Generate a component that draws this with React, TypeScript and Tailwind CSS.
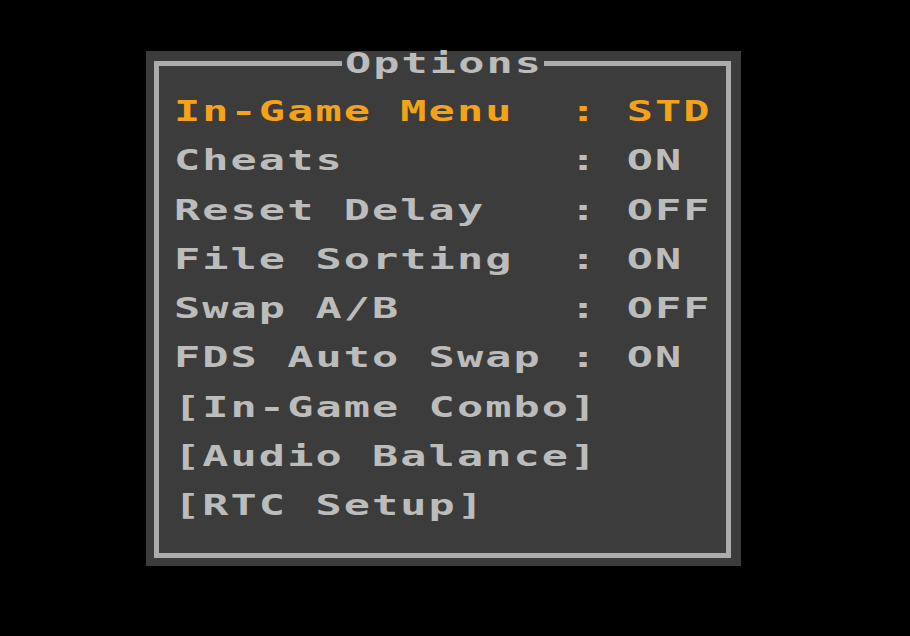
const rows = [
  { text: "In-Game Menu  : STD", active: true },
  { text: "Cheats        : ON" },
  { text: "Reset Delay   : OFF" },
  { text: "File Sorting  : ON" },
  { text: "Swap A/B      : OFF" },
  { text: "FDS Auto Swap : ON" },
  { text: "[In-Game Combo]" },
  { text: "[Audio Balance]" },
  { text: "[RTC Setup]" },
];

const font = { fontFamily: '"DejaVu Sans Mono", "Liberation Mono", monospace' };

export default function App() {
  return (
    <div className="h-[636px] w-[910px] bg-black pl-[146px] pt-[51px]" style={font}>
      <div className="h-[515px] w-[595px] bg-[#3c3c3c] pb-[8px] pl-[8px] pr-[10px] pt-[10px]">
        <div className="relative h-full w-full border-[5px] border-[#acacac] pl-[15px] pt-[21px]">
          <div className="absolute left-[183px] top-[-14px] h-[22px] w-[202px] bg-[#3c3c3c] pl-[3px]">
            <span className="inline-block origin-left scale-x-[1.5] whitespace-pre text-[29px] font-bold leading-[22px] tracking-[1.4px] text-[#bcbcbc]">
              Options
            </span>
          </div>
          {rows.map((r) => (
            <div key={r.text} className="h-[49.3px]">
              <span
                className={
                  "inline-block origin-left scale-x-[1.5] whitespace-pre text-[29px] font-bold leading-[49.3px] tracking-[1.4px] " +
                  (r.active ? "text-[#f5a316]" : "text-[#bcbcbc]")
                }
              >
                {r.text}
              </span>
            </div>
          ))}
        </div>
      </div>
    </div>
  );
}
